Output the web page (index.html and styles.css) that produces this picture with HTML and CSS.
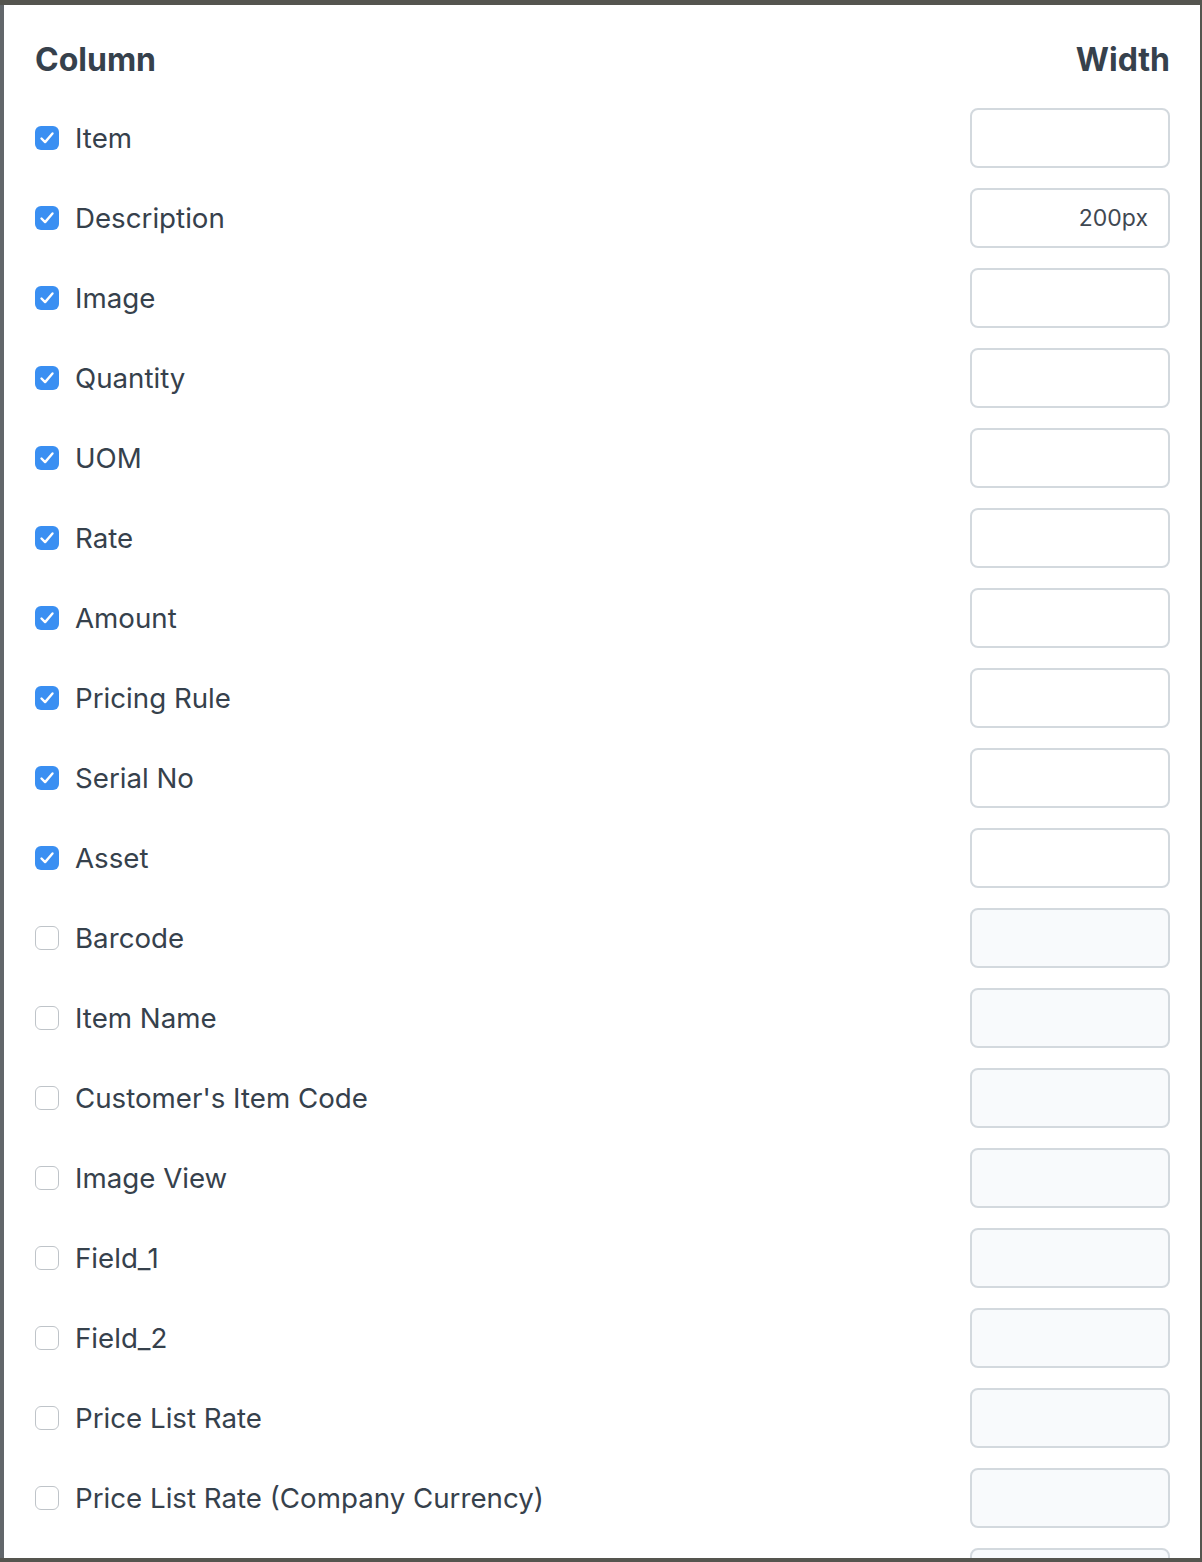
FILE: index.html
```html
<!DOCTYPE html>
<html lang="en">

<head>
    <meta charset="UTF-8">
    <title>Column Widths</title>
    <link rel="stylesheet" href="styles.css">
</head>

<body>
    <div class="modal">
        <div class="head">
            <span>Column</span>
            <span>Width</span>
        </div>
        <div class="rows" id="rows"></div>
    </div>
    <script>
        const columns = [
            ["Item", true, ""],
            ["Description", true, "200px"],
            ["Image", true, ""],
            ["Quantity", true, ""],
            ["UOM", true, ""],
            ["Rate", true, ""],
            ["Amount", true, ""],
            ["Pricing Rule", true, ""],
            ["Serial No", true, ""],
            ["Asset", true, ""],
            ["Barcode", false, ""],
            ["Item Name", false, ""],
            ["Customer's Item Code", false, ""],
            ["Image View", false, ""],
            ["Field_1", false, ""],
            ["Field_2", false, ""],
            ["Price List Rate", false, ""],
            ["Price List Rate (Company Currency)", false, ""],
            ["Discount Percentage", false, ""]
        ];

        const tick = '<svg viewBox="0 0 24 24" width="24" height="24"><path d="M6.5 12.5l3.6 3.6 7.4-8.6" fill="none" stroke="#fff" stroke-width="2.4" stroke-linecap="round" stroke-linejoin="round"/></svg>';

        const rows = document.getElementById("rows");
        columns.forEach(([label, checked, width]) => {
            const row = document.createElement("div");
            row.className = "row";
            row.innerHTML =
                '<label class="col-label">' +
                '<span class="check' + (checked ? ' checked' : '') + '">' + (checked ? tick : '') + '</span>' +
                '<span>' + label + '</span></label>' +
                '<input class="width-input" type="text" value="' + width + '"' + (checked ? '' : ' disabled') + '>';
            rows.appendChild(row);
        });
    </script>
</body>

</html>
```

FILE: styles.css
```css
* {
    box-sizing: border-box;
}

body {
    margin: 0;
    height: 1562px;
    overflow: hidden;
    background: #55554f;
    font-family: "Inter", "Liberation Sans", sans-serif;
    color: #36414c;
}

.modal {
    margin: 5px 2px 0 4px;
    height: 1553px;
    overflow: hidden;
    background: #fff;
    padding: 24px 30px 0 31px;
    box-shadow: -4px 0 0 #62676b;
}

.head {
    display: flex;
    justify-content: space-between;
    align-items: center;
    height: 60px;
    margin-bottom: 19px;
    font-size: 32px;
    font-weight: 700;
}

.rows {
    display: flex;
    flex-direction: column;
    gap: 20px;
}

.row {
    display: flex;
    justify-content: space-between;
    align-items: center;
    height: 60px;
}

.col-label {
    display: flex;
    align-items: center;
    gap: 16px;
    font-size: 27.7px;
}

.check {
    width: 24px;
    height: 24px;
    border-radius: 6px;
    border: 1.5px solid #bfc4c9;
    background: #fff;
    display: flex;
}

.check.checked {
    border: none;
    background: #3a8ff2;
}

.width-input {
    width: 200px;
    height: 60px;
    border: 2px solid #d3d9de;
    border-radius: 8px;
    padding: 0 20px;
    text-align: right;
    font-family: inherit;
    font-size: 23px;
    color: #3f4852;
    background: #fff;
}

.width-input:disabled {
    background: #f8fafc;
}
```
